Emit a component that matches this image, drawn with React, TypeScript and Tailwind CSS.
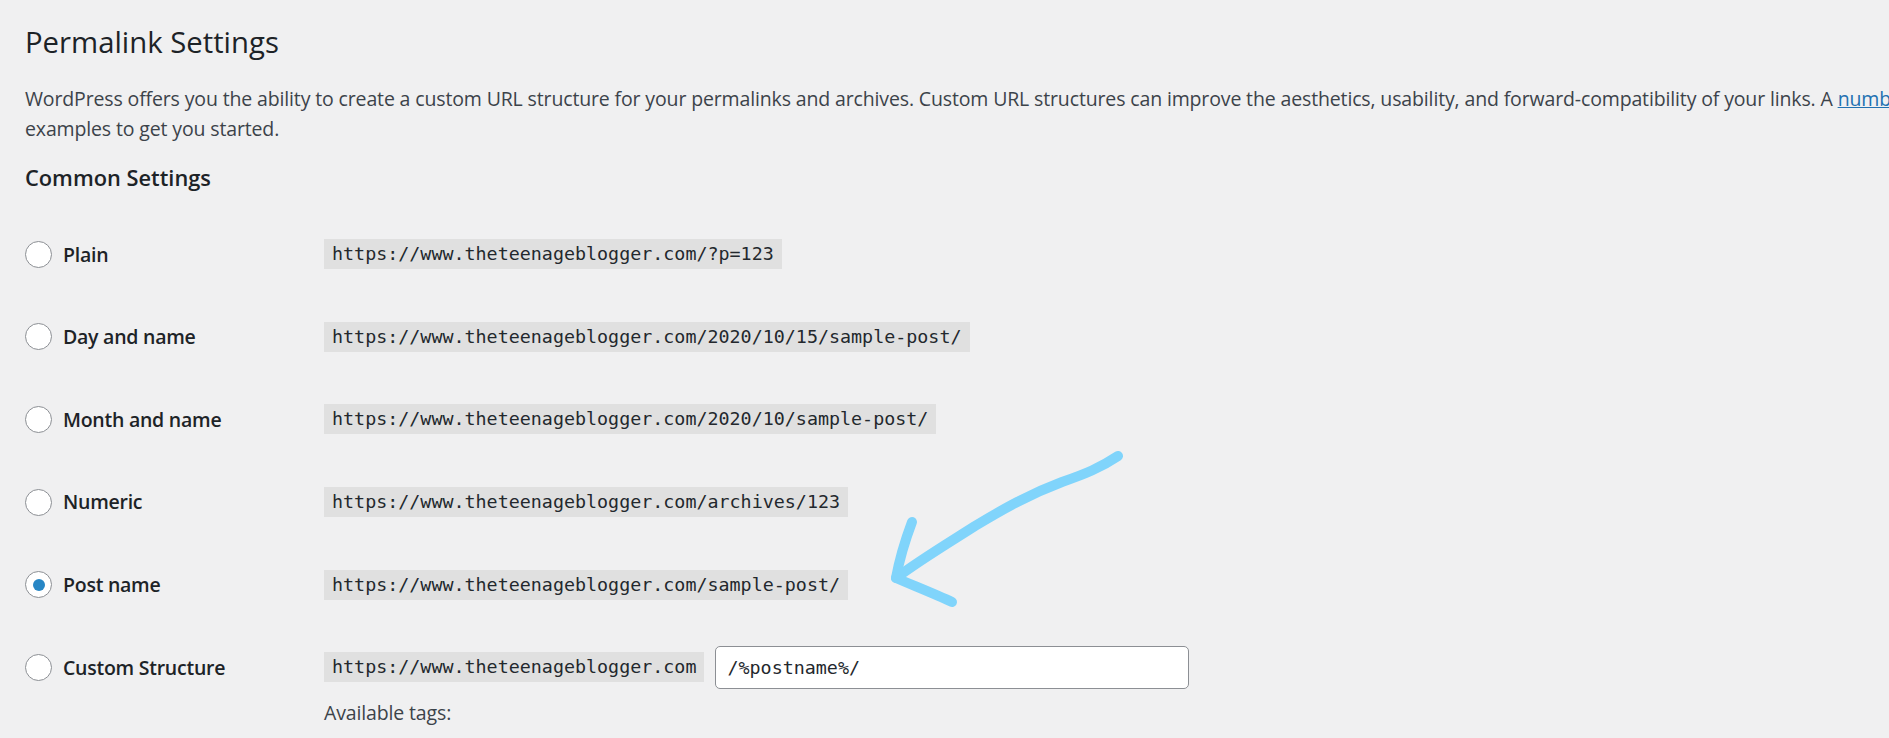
import {useState} from "react";

const siteUrl = "https://www.theteenageblogger.com"

const options = [
  {id: "plain", label: "Plain", example: siteUrl + "/?p=123"},
  {id: "day", label: "Day and name", example: siteUrl + "/2020/10/15/sample-post/"},
  {id: "month", label: "Month and name", example: siteUrl + "/2020/10/sample-post/"},
  {id: "numeric", label: "Numeric", example: siteUrl + "/archives/123"},
  {id: "post", label: "Post name", example: siteUrl + "/sample-post/"},
]

function Radio({checked, onClick}: { checked: boolean; onClick: () => void }) {
  return (
    <button
      onClick={onClick}
      className="flex h-[27px] w-[27px] shrink-0 items-center justify-center rounded-full border border-[#8c8f94] bg-white"
    >
      {checked && <span className="h-[12px] w-[12px] rounded-full bg-[#2786c5]"/>}
    </button>
  )
}

function Code({children}: { children: string }) {
  return (
    <code className="inline-block h-[30px] bg-[#e0e0e0] px-[8px] font-['DejaVu_Sans_Mono',monospace] text-[18.35px] leading-[30px] text-[#23282d]">
      {children}
    </code>
  )
}

function App() {
  const [selected, setSelected] = useState("post")
  const [custom, setCustom] = useState("/%postname%/")

  return (
    <div className="relative h-screen w-full overflow-hidden bg-[#f0f0f1] pl-[25px] font-['Open_Sans',sans-serif]">
      <h1 className="mt-[23px] text-[29.3px] leading-[38px] font-normal text-[#1d2327]">
        Permalink Settings
      </h1>

      <p className="mt-[23px] w-max text-[19.5px] leading-[30px] tracking-[-0.14px] text-[#3c434a]">
        WordPress offers you the ability to create a custom URL structure for your permalinks and archives. Custom URL
        structures can improve the aesthetics, usability, and forward-compatibility of your links. A{" "}
        <a href="#" className="text-[#2271b1] underline">number of tags are available</a>, and here are some
        <br/>
        examples to get you started.
      </p>

      <h2 className="mt-[19px] text-[21.8px] leading-[30px] font-semibold text-[#1d2327]">
        Common Settings
      </h2>

      <div className="mt-[20px] flex flex-col">
        {options.map((o) => (
          <div key={o.id} className="grid h-[82.6px] grid-cols-[299px_1fr] items-center">
            <label className="flex items-center gap-[11px] text-[19.5px] font-semibold tracking-[-0.25px] text-[#1d2327]">
              <Radio checked={selected === o.id} onClick={() => setSelected(o.id)}/>
              {o.label}
            </label>
            <div>
              <Code>{o.example}</Code>
            </div>
          </div>
        ))}

        <div className="grid grid-cols-[299px_1fr] pt-[20px]">
          <label className="flex h-[43px] items-center gap-[11px] text-[19.5px] font-semibold tracking-[-0.25px] text-[#1d2327]">
            <Radio checked={selected === "custom"} onClick={() => setSelected("custom")}/>
            Custom Structure
          </label>
          <div className="flex flex-col">
            <div className="flex items-center gap-[11px]">
              <Code>{siteUrl}</Code>
              <input
                value={custom}
                onChange={(e) => setCustom(e.target.value)}
                className="h-[43px] w-[474px] rounded-[5px] border border-[#8c8f94] bg-white px-[11px] font-['DejaVu_Sans_Mono',monospace] text-[18.35px] text-[#23282d] outline-none"
              />
            </div>
            <p className="mt-[9px] text-[19.5px] leading-[30px] tracking-[-0.14px] text-[#3c434a]">Available tags:</p>
          </div>
        </div>
      </div>

      {/* hand drawn arrow pointing at "Post name" */}
      <svg className="pointer-events-none absolute left-0 top-0" width="1889" height="738" fill="none">
        <path
          d="M1118 456 C1100 468 1085 474 1062 482 C1030 494 1005 508 975 526 C950 542 920 560 896 578"
          stroke="#80d4fb" strokeWidth="10" strokeLinecap="round" strokeLinejoin="round"
        />
        <path
          d="M912 522 C906 538 900 556 896 578 C912 585 935 594 952 602"
          stroke="#80d4fb" strokeWidth="10" strokeLinecap="round" strokeLinejoin="round"
        />
      </svg>
    </div>
  )
}

export default App
